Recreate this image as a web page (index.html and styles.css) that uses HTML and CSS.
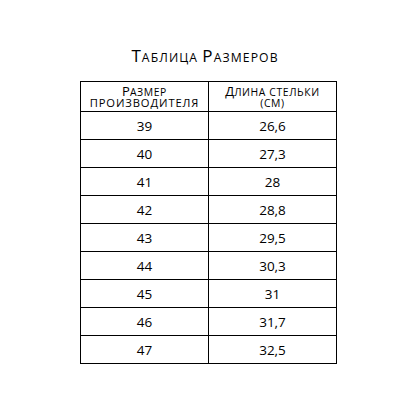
FILE: index.html
```html
<!DOCTYPE html>
<html lang="ru">
<head>
<meta charset="utf-8">
<link rel="stylesheet" href="styles.css">
</head>
<body>
<div class="page">
  <h1 class="title"><span class="t-cap">Т</span><span class="t-sm">аблица</span> <span class="t-cap">Р</span><span class="t-sm">азмеров</span></h1>
  <table class="sizes">
    <thead>
      <tr>
        <th>
          <span class="hl"><span class="h-cap">Р</span><span class="h-sm">азмер</span></span>
          <span class="hl h-all">производителя</span>
        </th>
        <th>
          <span class="hl"><span class="h-cap">Д</span><span class="h-sm">лина стельки</span></span>
          <span class="hl"><span class="h-sm">(см)</span></span>
        </th>
      </tr>
    </thead>
    <tbody>
      <tr><td>39</td><td>26,6</td></tr>
      <tr><td>40</td><td>27,3</td></tr>
      <tr><td>41</td><td>28</td></tr>
      <tr><td>42</td><td>28,8</td></tr>
      <tr><td>43</td><td>29,5</td></tr>
      <tr><td>44</td><td>30,3</td></tr>
      <tr><td>45</td><td>31</td></tr>
      <tr><td>46</td><td>31,7</td></tr>
      <tr><td>47</td><td>32,5</td></tr>
    </tbody>
  </table>
</div>
</body>
</html>
```
FILE: styles.css
```css
html, body {
  margin: 0;
  padding: 0;
  background: #fff;
}
body {
  width: 420px;
  height: 420px;
  font-family: "Open Sans", "Liberation Sans", sans-serif;
  color: #000;
}
.page {
  padding-top: 46px;
  padding-left: 80px;
}
.title {
  width: 250px;
  margin: 0 0 11px 0;
  font-size: 12px;
  font-weight: normal;
  text-align: center;
  line-height: 24px;
  text-transform: uppercase;
  letter-spacing: 1.1px;
}
.t-cap {
  font-size: 17px;
  line-height: 1;
}
.t-sm {
  font-size: 12.2px;
  line-height: 1;
}
.sizes {
  border-collapse: collapse;
  width: 257px;
  table-layout: fixed;
}
.sizes th, .sizes td {
  border: 1px solid #000;
  text-align: center;
  padding: 0;
  font-weight: normal;
}
.sizes th {
  height: 28px;
  font-size: 10px;
  vertical-align: middle;
  text-transform: uppercase;
  padding-top: 1px;
}
.hl {
  display: block;
  height: 12px;
  line-height: 12px;
}
.h-cap {
  font-size: 13px;
}
.h-sm {
  font-size: 10.4px;
  letter-spacing: 0.6px;
}
.h-all {
  font-size: 11.2px;
  letter-spacing: 0.9px;
}
.sizes td {
  font-size: 13.5px;
  height: 27px;
  line-height: 16px;
}
```
